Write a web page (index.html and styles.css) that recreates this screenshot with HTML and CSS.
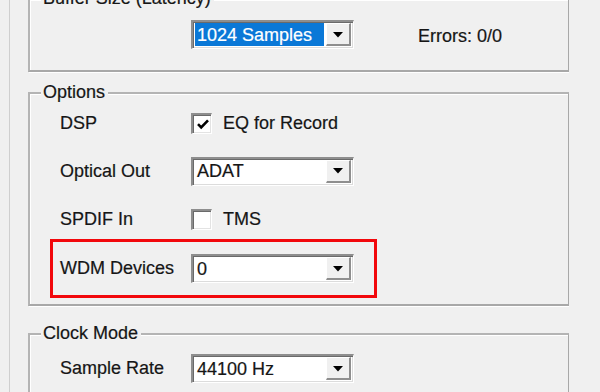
FILE: index.html
```html
<!DOCTYPE html>
<html>
<head>
<meta charset="utf-8">
<link rel="stylesheet" href="styles.css">
</head>
<body>
<div class="panel">
  <div class="group group-buffer">
    <span class="group-title">Buffer Size (Latency)</span>
    <div class="buffer-row">
      <div class="combo">
        <span class="combo-value selected">1024 Samples</span>
        <span class="combo-btn"><svg width="10" height="6" viewBox="0 0 10 6"><path d="M0 0H10L5 5.5Z" fill="#000"/></svg></span>
      </div>
      <span class="errors">Errors: 0/0</span>
    </div>
  </div>

  <div class="group group-options">
    <span class="group-title">Options</span>
    <div class="row">
      <span class="label">DSP</span>
      <span class="check">
        <span class="box"><svg width="14" height="14" viewBox="0 0 14 14"><path d="M2 7.2L5.2 10.4L12 3.4" fill="none" stroke="#000" stroke-width="2.6"/></svg></span>
        <span>EQ for Record</span>
      </span>
    </div>
    <div class="row">
      <span class="label">Optical Out</span>
      <div class="combo">
        <span class="combo-value">ADAT</span>
        <span class="combo-btn"><svg width="10" height="6" viewBox="0 0 10 6"><path d="M0 0H10L5 5.5Z" fill="#000"/></svg></span>
      </div>
    </div>
    <div class="row">
      <span class="label">SPDIF In</span>
      <span class="check">
        <span class="box"></span>
        <span>TMS</span>
      </span>
    </div>
    <div class="row row-highlight">
      <span class="label">WDM Devices</span>
      <div class="combo">
        <span class="combo-value">0</span>
        <span class="combo-btn"><svg width="10" height="6" viewBox="0 0 10 6"><path d="M0 0H10L5 5.5Z" fill="#000"/></svg></span>
      </div>
    </div>
  </div>

  <div class="group group-clock">
    <span class="group-title">Clock Mode</span>
    <div class="row">
      <span class="label">Sample Rate</span>
      <div class="combo">
        <span class="combo-value">44100 Hz</span>
        <span class="combo-btn"><svg width="10" height="6" viewBox="0 0 10 6"><path d="M0 0H10L5 5.5Z" fill="#000"/></svg></span>
      </div>
    </div>
  </div>
</div>
</body>
</html>
```

FILE: styles.css
```css
html, body {
  margin: 0;
  padding: 0;
  background: #f0f0f0;
  overflow: hidden;
}

body {
  width: 600px;
  height: 392px;
  font-family: "Liberation Sans", Arial, sans-serif;
  font-size: 18px;
  color: #161616;
  -webkit-text-stroke: 0.2px #161616;
}

.panel {
  margin-left: 9px;
  height: 392px;
  overflow: hidden;
  border-left: 1px solid #cfcfcf;
  padding-left: 18px;
  padding-top: 12px;
  box-sizing: border-box;
  width: 560px;
}

.group {
  position: relative;
  box-sizing: border-box;
  width: 542px;
  border: 2px solid #b4b4b4;
  border-right-color: #a8a8a8;
  border-bottom-color: #a8a8a8;
  box-shadow: 1px 1px 0 #ffffff, inset 1px 1px 0 #ffffff;
}

.group-title {
  position: absolute;
  top: -12px;
  left: 11px;
  padding: 0 3px 0 2px;
  line-height: 20px;
  background: #f0f0f0;
  white-space: nowrap;
}

.group-buffer {
  margin-top: -14px;
  height: 74px;
  padding-top: 20px;
}

.buffer-row {
  display: flex;
  align-items: center;
  padding-left: 161px;
}

.errors {
  margin-left: 64px;
  margin-top: 3px;
}

.group-options {
  margin-top: 20px;
  height: 214px;
  padding-top: 5px;
}

.group-clock {
  margin-top: 27px;
  height: 68px;
  padding-top: 19px;
}

.row {
  display: flex;
  align-items: center;
  height: 48px;
  padding-left: 30px;
}

.label {
  width: 131px;
  flex: none;
  white-space: nowrap;
}

.row-highlight {
  box-sizing: border-box;
  margin-left: 20px;
  margin-top: -4px;
  width: 327px;
  height: 59px;
  padding-left: 7px;
  border: 3px solid #f2080c;
}

.group-clock .row {
  height: 29px;
}

.check {
  display: flex;
  align-items: center;
  gap: 11px;
}

.box {
  box-sizing: border-box;
  width: 21px;
  height: 21px;
  background: #ffffff;
  border-style: solid;
  border-width: 2px 1px 1px 2px;
  border-color: #8e8e8e #ffffff #ffffff #8e8e8e;
  box-shadow: inset 1px 1px 0 #6a6a6a, inset -1px -1px 0 #e3e3e3;
  display: flex;
  align-items: center;
  justify-content: center;
}

.box svg {
  margin-left: 1px;
  margin-top: 1px;
}

.combo {
  box-sizing: border-box;
  width: 163px;
  height: 29px;
  display: flex;
  align-items: stretch;
  background: #ffffff;
  border-style: solid;
  border-width: 2px 1px 1px 2px;
  border-color: #8e8e8e #ffffff #ffffff #8e8e8e;
  box-shadow: inset 1px 1px 0 #6a6a6a, inset -1px -1px 0 #dcdcdc;
  padding: 1px 2px 2px 1px;
}

.combo-value {
  flex: 1;
  display: flex;
  align-items: center;
  padding-left: 3px;
  margin-right: 2px;
  white-space: nowrap;
  line-height: 20px;
}

.combo-value.selected {
  background: #0a78d7;
  color: #ffffff;
  -webkit-text-stroke: 0.2px #ffffff;
  margin-left: 1px;
  padding-left: 2px;
}

.combo-btn {
  box-sizing: border-box;
  width: 25px;
  flex: none;
  background: #f0f0f0;
  border-style: solid;
  border-width: 1px 2px 2px 1px;
  border-color: #ffffff #8e8e8e #8e8e8e #ffffff;
  display: flex;
  align-items: center;
  justify-content: center;
}

.combo-btn svg {
  margin-top: 1px;
}
```
